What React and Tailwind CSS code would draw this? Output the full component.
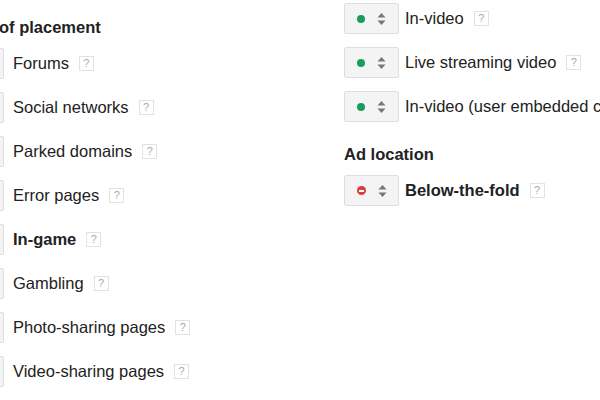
import React from "react";

const placements = [
  { label: "Forums" },
  { label: "Social networks" },
  { label: "Parked domains" },
  { label: "Error pages" },
  { label: "In-game", bold: true },
  { label: "Gambling" },
  { label: "Photo-sharing pages" },
  { label: "Video-sharing pages" },
];

const videos = ["In-video", "Live streaming video", "In-video (user embedded content)"];

function Help() {
  return (
    <span className="ml-[10px] inline-flex h-[15px] w-[15px] shrink-0 items-center justify-center border border-[#e2e2e2] bg-white text-[11px] leading-none text-[#aaa]">
      ?
    </span>
  );
}

function Arrows() {
  return (
    <svg width="9" height="14" viewBox="0 0 9 14" className="shrink-0">
      <path d="M4.5 1 L8.5 5.5 L0.5 5.5 Z" fill="#777" />
      <path d="M4.5 13 L8.5 8.5 L0.5 8.5 Z" fill="#777" />
    </svg>
  );
}

function Toggle({ state = "on" }) {
  return (
    <div className="flex h-[31px] w-[55px] shrink-0 items-center gap-[12px] rounded-[2px] border border-[#dedede] bg-[#f4f4f4] pl-[12px]">
      {state === "on" && <span className="h-[8px] w-[8px] rounded-full bg-[#1a9c5b]" />}
      {state === "off" && (
        <span className="flex h-[9px] w-[9px] items-center justify-center rounded-full bg-[#dd3c3c]">
          <span className="h-[2px] w-[5px] bg-white" />
        </span>
      )}
      {state === "empty" && <span className="h-[8px] w-[8px]" />}
      <Arrows />
    </div>
  );
}

function Row({ label, bold, state, gap = "ml-[6px]" }) {
  return (
    <div className="flex items-center">
      <Toggle state={state} />
      <span className={`${gap} whitespace-nowrap text-[16.5px] text-[#222] ${bold ? "font-bold" : ""}`}>{label}</span>
      <Help />
    </div>
  );
}

export default function App() {
  return (
    <div
      className="relative h-[400px] w-[600px] overflow-hidden bg-white"
      style={{ fontFamily: '"Liberation Sans", Arial, sans-serif' }}
    >
      <div className="flex">
        <div className="ml-[-51px] w-[395px] shrink-0 pt-[18px]">
          <h2 className="ml-[50px] text-[16.5px] font-bold leading-[19px] text-[#222]">of placement</h2>
          <div className="mt-[11px] flex flex-col gap-[13px]">
            {placements.map((p) => (
              <Row key={p.label} label={p.label} bold={p.bold} state="empty" gap="ml-[9px]" />
            ))}
          </div>
        </div>
        <div className="shrink-0 pt-[3px]">
          <div className="flex flex-col gap-[13px]">
            {videos.map((v) => (
              <Row key={v} label={v} state="on" />
            ))}
          </div>
          <h2 className="mt-[23px] text-[16.5px] font-bold leading-[19px] text-[#222]">Ad location</h2>
          <div className="mt-[11px]">
            <Row label="Below-the-fold" bold state="off" />
          </div>
        </div>
      </div>
    </div>
  );
}
